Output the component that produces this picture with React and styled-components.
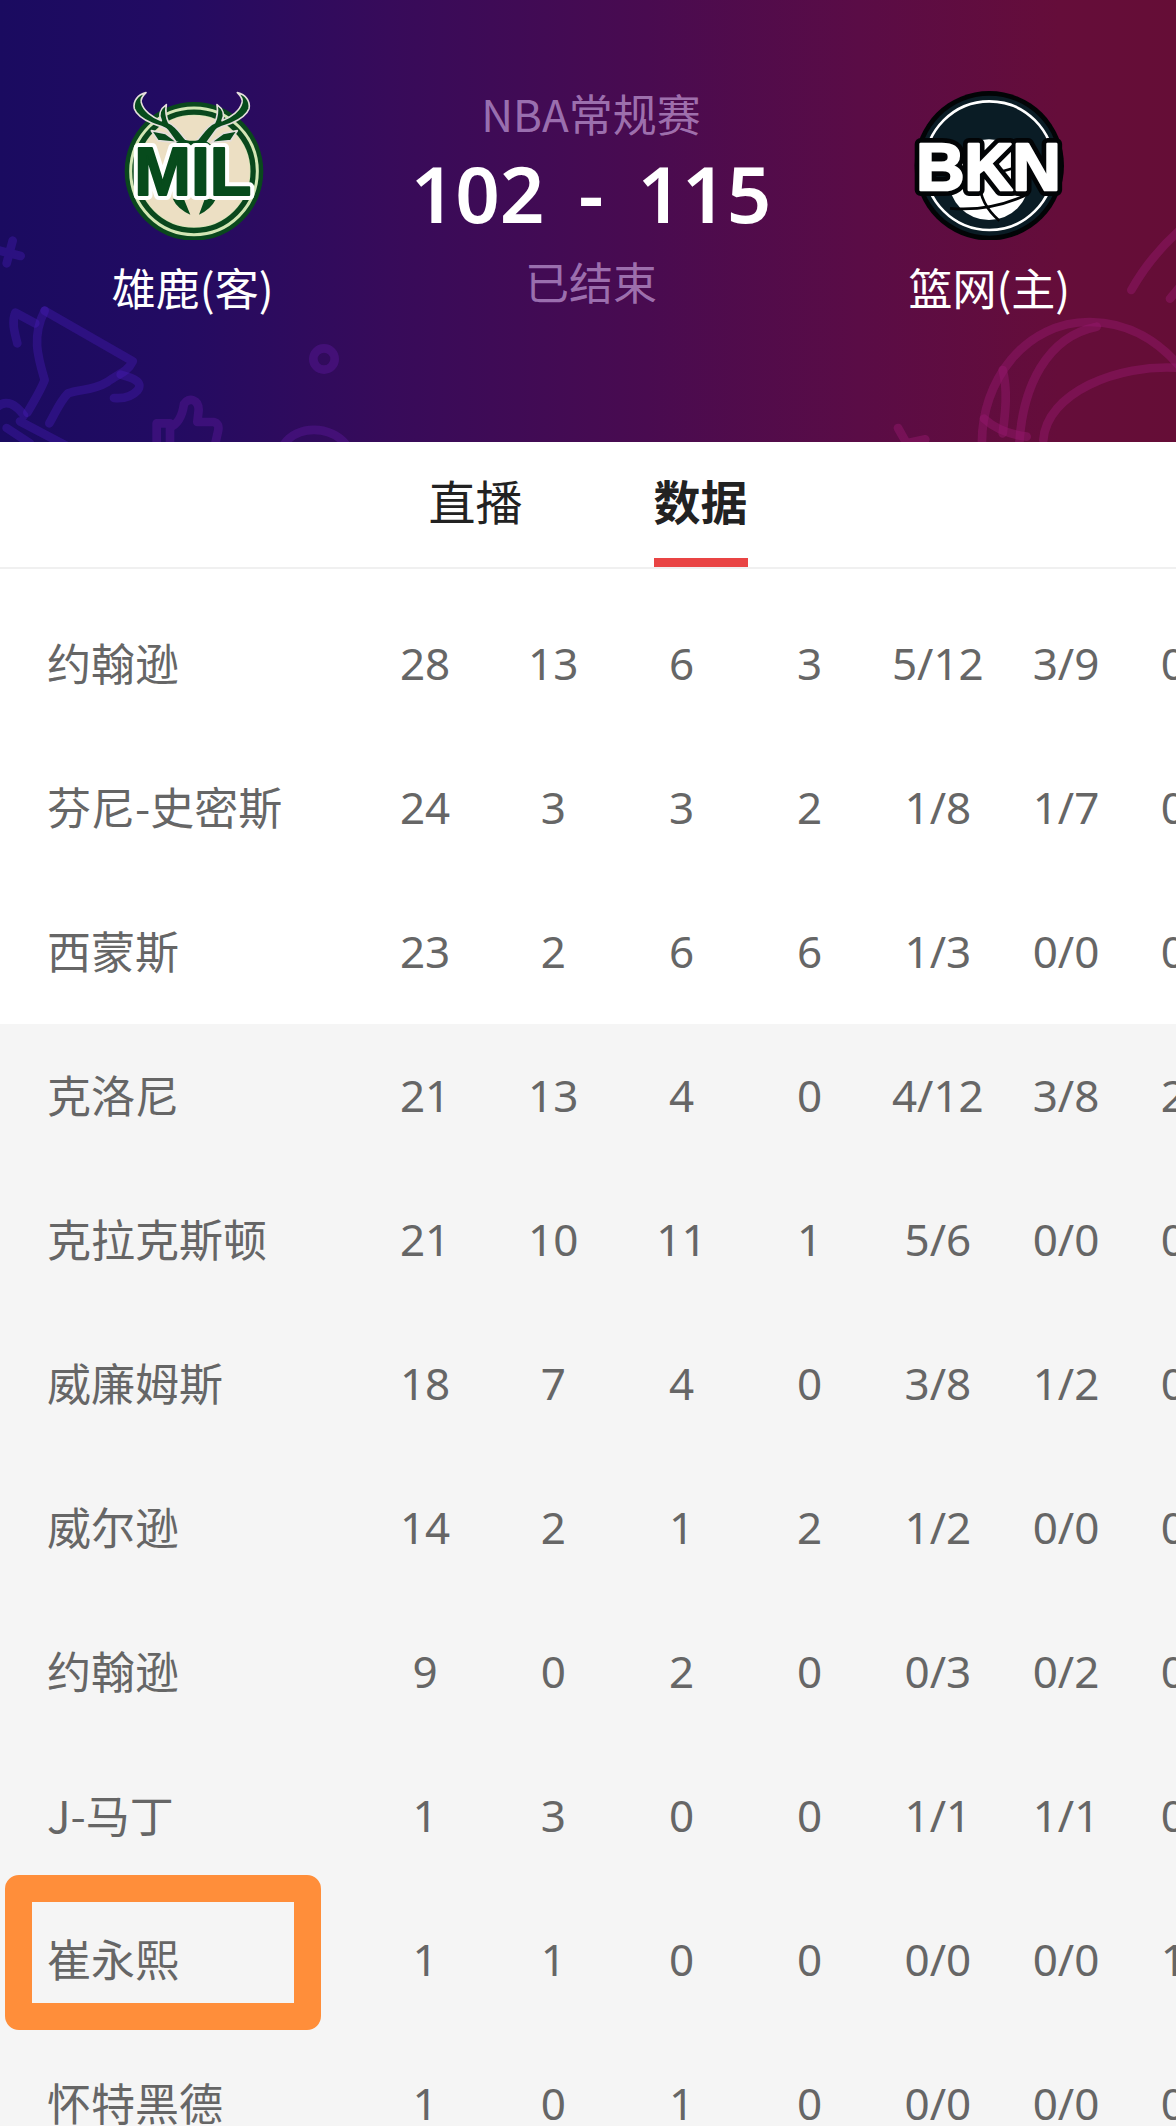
import React from 'react'
import styled, { createGlobalStyle } from 'styled-components'

const GlobalStyle = createGlobalStyle`
  * {
    box-sizing: border-box;
  }

  body {
    margin: 0;
    background: #fff;
    font-family: "Noto Sans", "Noto Sans CJK SC", sans-serif;
  }
`

const Page = styled.div`
  display: flex;
  flex-flow: column;
  height: 100vh;
  overflow: hidden;
`

const Hero = styled.header`
  position: relative;
  flex: none;
  display: grid;
  grid-template-columns: 15fr 17fr 15fr;
  padding: 83px 0 125px 6px;
  overflow: hidden;
  color: #fff;
  background: linear-gradient(90deg, #1a0b60 0%, #220b62 14%, #370b5a 33%, #490b50 55%, #5a0c46 73%, #650d3a 90%, #650d36 100%);
`

const Decor = styled.svg`
  position: absolute;
  bottom: 0;
  ${props => props.$side}: 0;
  width: 396px;
  height: 442px;
  fill: none;
  stroke: ${props => props.$color};
  stroke-width: 26;
  stroke-linecap: round;
  stroke-linejoin: round;
`

const Team = styled.div`
  position: relative;
  display: flex;
  flex-flow: column;
  align-items: center;
  padding-top: 7px;
`

const Logo = styled.svg`
  width: 150px;
  height: 150px;
  margin-bottom: 17px;
  font-family: "Liberation Sans", sans-serif;
  font-weight: 700;
`

const TeamName = styled.span`
  font-family: "Noto Sans CJK SC", sans-serif;
  font-size: 44px;
  line-height: 60px;
`

const Summary = styled.div`
  position: relative;
  display: flex;
  flex-flow: column;
  align-items: center;
`

const Note = styled.span`
  font-family: "Noto Sans CJK SC", sans-serif;
  font-size: 44px;
  line-height: 60px;
  color: rgba(232, 200, 255, 0.55);
`

const Score = styled.div`
  display: flex;
  gap: 34px;
  margin-bottom: 8px;
  font-size: 78px;
  font-weight: 600;
  line-height: 100px;
`

const Tabs = styled.nav`
  flex: none;
  display: flex;
  justify-content: center;
  gap: 131px;
  height: 127px;
  border-bottom: 2px solid #f0f0f0;
`

const Tab = styled.button`
  padding: 0;
  border: 0;
  border-bottom: 9px solid ${props => (props.$active ? '#e94444' : 'transparent')};
  background: none;
  color: #222;
  font-family: "Noto Sans CJK SC", sans-serif;
  font-size: 47px;
  font-weight: ${props => (props.$active ? 700 : 400)};
  line-height: 116px;
`

const StatsArea = styled.main`
  flex: 1;
  min-height: 0;
  padding-top: 23px;
  overflow: hidden;
`

const StatsTable = styled.table`
  width: 107%;
  table-layout: fixed;
  border-collapse: collapse;
  color: #666;
  font-size: 44px;
  line-height: 60px;
`

const Row = styled.tr`
  height: 144px;
  background: ${props => (props.$bench ? '#f5f5f5' : '#fff')};
`

const NameCell = styled.th`
  position: relative;
  width: 361px;
  padding: 0 0 4px 47px;
  font-family: "Noto Sans CJK SC", sans-serif;
  font-weight: 400;
  text-align: left;
  white-space: nowrap;
`

const StatCell = styled.td`
  padding: 0 0 2px;
  text-align: center;
  white-space: nowrap;
`

const Marker = styled.span`
  position: absolute;
  top: -13px;
  left: 5px;
  width: 316px;
  height: 155px;
  border: 27px solid #ff8e3a;
  border-radius: 14px;
`

const players = [
  { name: '约翰逊', stats: ['28', '13', '6', '3', '5/12', '3/9', '0/0'] },
  { name: '芬尼-史密斯', stats: ['24', '3', '3', '2', '1/8', '1/7', '0/0'] },
  { name: '西蒙斯', stats: ['23', '2', '6', '6', '1/3', '0/0', '0/0'] },
  { name: '克洛尼', bench: true, stats: ['21', '13', '4', '0', '4/12', '3/8', '2/2'] },
  { name: '克拉克斯顿', bench: true, stats: ['21', '10', '11', '1', '5/6', '0/0', '0/0'] },
  { name: '威廉姆斯', bench: true, stats: ['18', '7', '4', '0', '3/8', '1/2', '0/0'] },
  { name: '威尔逊', bench: true, stats: ['14', '2', '1', '2', '1/2', '0/0', '0/0'] },
  { name: '约翰逊', bench: true, stats: ['9', '0', '2', '0', '0/3', '0/2', '0/0'] },
  { name: 'J-马丁', bench: true, stats: ['1', '3', '0', '0', '1/1', '1/1', '0/0'] },
  { name: '崔永熙', bench: true, marked: true, stats: ['1', '1', '0', '0', '0/0', '0/0', '1/2'] },
  { name: '怀特黑德', bench: true, stats: ['1', '0', '1', '0', '0/0', '0/0', '0/0'] },
]

const antler = 'M132 38C108 44 92 62 97 86C104 106 124 118 150 130C166 138 184 138 196 150L222 186L262 190C238 168 228 140 200 128C192 112 190 92 193 74C176 86 168 104 178 122C150 112 124 92 118 68C114 54 124 46 132 38Z'
const ear = 'M148 152L190 160L228 188L168 182Z'

const BucksLogo = () => (
  <Logo viewBox="48 30 450 450" role="img" aria-label="MIL">
    <circle cx="276" cy="274" r="208" fill="#0a481d" />
    <circle cx="276" cy="274" r="190" fill="none" stroke="#d3e6b4" strokeWidth="9" />
    <circle cx="276" cy="274" r="170" fill="#ecdfc3" stroke="#d3e6b4" strokeWidth="5" />
    <circle cx="276" cy="274" r="176" fill="none" stroke="#0a481d" strokeWidth="13" />
    <g fill="#074b1c" stroke="#e5dfdc" strokeWidth="5" strokeLinejoin="round">
      <path d={ear} />
      <path d={ear} transform="matrix(-1 0 0 1 554 0)" />
      <path d={antler} />
      <path d={antler} transform="matrix(-1 0 0 1 538 0)" />
    </g>
    <path d="M240 176C256 184 286 184 302 176L330 196H212Z" fill="#074b1c" />
    <path d="M212 356L246 358L265 404Q226 386 212 356ZM342 356L308 358L291 404Q328 386 342 356Z" fill="#074b1c" />
    <g fontSize="204" fill="#074b1c" strokeLinejoin="round">
      <text x="97" y="346" stroke="#fff" strokeWidth="30">MIL</text>
      <text x="97" y="346" stroke="#074b1c" strokeWidth="6">MIL</text>
    </g>
  </Logo>
)

const NetsLogo = () => (
  <Logo viewBox="42 30 450 450" role="img" aria-label="BKN">
    <circle cx="268" cy="257" r="224" fill="#020406" />
    <circle cx="268" cy="257" r="210" fill="#0a1c25" />
    <circle cx="268" cy="257" r="193" fill="none" stroke="#fff" strokeWidth="8" />
    <circle cx="267" cy="299" r="121" fill="#fff" />
    <g fill="none" stroke="#020406" strokeWidth="8">
      <path d="M150 385Q270 396 385 342" />
      <path d="M288 184C226 260 216 352 298 422" />
      <path d="M300 276L350 262" />
    </g>
    <g fontSize="200" fill="#fff" strokeLinejoin="round">
      <text x="49" y="331" stroke="#020406" strokeWidth="36">BKN</text>
      <text x="49" y="331" stroke="#fff" strokeWidth="8">BKN</text>
    </g>
  </Logo>
)

const TrophyDecor = () => (
  <Decor $side="left" $color="rgba(74, 30, 190, 0.35)" viewBox="0 0 1188 1326" aria-hidden="true">
    <path d="M38 722L20 790M-8 750L62 768" />
    <path d="M134 932L398 1084C382 1118 352 1122 322 1146C280 1172 238 1168 204 1180C178 1206 166 1240 148 1270" />
    <path d="M134 932C94 1010 114 1072 134 1140C120 1176 100 1206 82 1238" />
    <path d="M106 970L46 938C34 966 44 998 52 1030" />
    <path d="M362 1124C400 1134 432 1146 412 1172C394 1192 366 1196 342 1194" />
    <path d="M-10 1222C20 1194 48 1216 72 1246M60 1264L204 1340M20 1284L90 1330" />
    <g stroke="rgba(96, 26, 160, 0.4)">
      <circle cx="972" cy="1077" r="32" />
      <path d="M470 1330V1270H510V1330M510 1282C540 1270 548 1240 552 1212C566 1190 596 1198 596 1230L592 1266H640Q660 1270 654 1294L646 1330" />
      <path d="M850 1336C890 1274 992 1274 1040 1336" />
    </g>
  </Decor>
)

const BallDecor = () => (
  <Decor $side="right" $color="rgba(150, 24, 110, 0.45)" viewBox="0 0 1188 1326" aria-hidden="true">
    <path d="M1054 870Q1110 770 1200 690M1170 896L1200 860" />
    <path d="M606 1340C600 1140 740 964 930 966C1050 966 1140 1030 1200 1100" />
    <path d="M668 1110C684 1170 676 1240 668 1300" />
    <path d="M718 1330C728 1160 800 1010 950 980" />
    <path d="M790 1320C800 1180 1010 1090 1200 1104" />
    <path d="M612 1256Q660 1300 740 1310M354 1284L380 1330L436 1318" />
  </Decor>
)

const PlayerRow = ({ player }) => (
  <Row $bench={player.bench}>
    <NameCell scope="row">
      {player.name}
      {player.marked && <Marker />}
    </NameCell>
    {player.stats.map((stat, i) => (
      <StatCell key={i}>{stat}</StatCell>
    ))}
  </Row>
)

const App = () => (
  <Page>
    <GlobalStyle />
    <Hero>
      <TrophyDecor />
      <BallDecor />
      <Team>
        <BucksLogo />
        <TeamName>雄鹿(客)</TeamName>
      </Team>
      <Summary>
        <Note>NBA常规赛</Note>
        <Score>
          <span>102</span>
          <span>-</span>
          <span>115</span>
        </Score>
        <Note>已结束</Note>
      </Summary>
      <Team>
        <NetsLogo />
        <TeamName>篮网(主)</TeamName>
      </Team>
    </Hero>
    <Tabs>
      <Tab type="button">直播</Tab>
      <Tab type="button" $active>数据</Tab>
    </Tabs>
    <StatsArea>
      <StatsTable>
        <tbody>
          {players.map((player, i) => (
            <PlayerRow key={i} player={player} />
          ))}
        </tbody>
      </StatsTable>
    </StatsArea>
  </Page>
)

export default App
